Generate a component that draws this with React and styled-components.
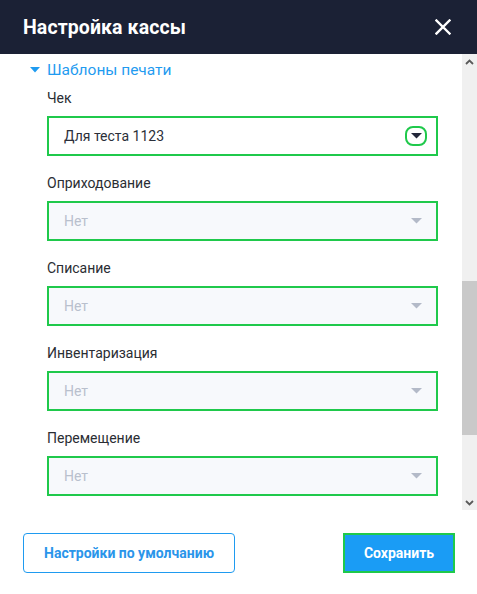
import styled, { createGlobalStyle } from "styled-components";

const GlobalStyle = createGlobalStyle`
  html, body {
    margin: 0;
    padding: 0;
    background: #ffffff;
  }
  body {
    font-family: Roboto, "Liberation Sans", sans-serif;
  }
  * {
    box-sizing: border-box;
  }
`;

const Modal = styled.div`
  width: 477px;
  height: 594px;
  display: flex;
  flex-direction: column;
  background: #ffffff;
`;

const Header = styled.div`
  height: 54px;
  flex-shrink: 0;
  display: flex;
  align-items: center;
  justify-content: space-between;
  padding: 0 25px 0 23px;
  background: #1b2135;
`;

const Title = styled.h1`
  margin: 0;
  font-size: 19.5px;
  font-weight: 700;
  color: #ffffff;
  letter-spacing: 0.1px;
`;

const CloseButton = styled.button`
  width: 18px;
  height: 18px;
  padding: 0;
  border: none;
  background: transparent;
  display: flex;
  align-items: center;
  justify-content: center;
  cursor: pointer;
`;

const Body = styled.div`
  flex: 1;
  min-height: 0;
  display: flex;
`;

const Content = styled.div`
  flex: 1;
  overflow: hidden;
  padding: 5px 24px 0 0;
`;

const Scrollbar = styled.div`
  width: 15px;
  flex-shrink: 0;
  display: flex;
  flex-direction: column;
  background: #f0f0f0;
`;

const ScrollButton = styled.div`
  height: 15px;
  display: flex;
  align-items: center;
  justify-content: center;
`;

const Track = styled.div`
  flex: 1;
  padding-top: ${(props) => props.offset}px;
`;

const Thumb = styled.div`
  height: ${(props) => props.size}px;
  background: #c9c9c9;
`;

const Section = styled.div`
  display: flex;
  flex-direction: column;
`;

const SectionHeader = styled.div`
  display: flex;
  align-items: center;
  height: 22px;
  padding-left: 30px;
  gap: 7px;
  font-size: 15.5px;
  color: #1f9bf0;
  cursor: pointer;
`;

const Fields = styled.div`
  display: flex;
  flex-direction: column;
  gap: 17px;
  padding: 7px 0 0 47px;
`;

const Field = styled.div`
  display: flex;
  flex-direction: column;
  gap: 8px;
`;

const Label = styled.label`
  font-size: 14px;
  line-height: 20px;
  color: #2a2d33;
`;

const SelectBox = styled.div`
  height: 40px;
  display: flex;
  align-items: center;
  justify-content: space-between;
  padding: 0 8px 0 15px;
  border: 2px solid #1fc94b;
  background: ${(props) => (props.disabled ? "#f7f9fc" : "#ffffff")};
  font-size: 14px;
  color: ${(props) => (props.disabled ? "#b9c0cd" : "#2b2f3a")};
`;

const Arrow = styled.span`
  width: 22px;
  height: 20px;
  display: flex;
  align-items: center;
  justify-content: center;
  border-radius: 8px;
  border: 2px solid ${(props) => (props.focused ? "#1fc94b" : "transparent")};
  margin-right: 1px;
`;

const Footer = styled.div`
  height: 84px;
  flex-shrink: 0;
  display: flex;
  align-items: center;
  justify-content: space-between;
  padding: 2px 22px 0 23px;
`;

const Button = styled.button`
  height: 40px;
  padding: 0 10px;
  font-family: Roboto, "Liberation Sans", sans-serif;
  font-size: 14px;
  font-weight: 700;
  cursor: pointer;
  border: ${(props) => (props.primary ? "2px solid #1fc94b" : "1px solid #1f9bf0")};
  border-radius: ${(props) => (props.primary ? "0" : "4px")};
  background: ${(props) => (props.primary ? "#1a9cf5" : "#ffffff")};
  color: ${(props) => (props.primary ? "#ffffff" : "#2a95ea")};
  width: ${(props) => props.width}px;
`;

const Caret = ({ color }) => (
  <svg width="10" height="6" viewBox="0 0 10 6">
    <path d="M0 0 L10 0 L5 5.5 Z" fill={color} />
  </svg>
);

const Chevron = ({ up }) => (
  <svg width="9" height="6" viewBox="0 0 9 6">
    <path d={up ? "M1 5 L4.5 1.5 L8 5" : "M1 1 L4.5 4.5 L8 1"} fill="none" stroke="#5a5a5a" strokeWidth="1.8" />
  </svg>
);

const Select = ({ value, disabled, focused }) => (
  <SelectBox disabled={disabled}>
    <span>{value}</span>
    <Arrow focused={focused}>
      <svg width="11" height="6" viewBox="0 0 11 6">
        <path d="M0 0 L11 0 L5.5 5.5 Z" fill={disabled ? "#b3bac8" : "#23273a"} />
      </svg>
    </Arrow>
  </SelectBox>
);

const printFields = [
  { label: "Чек", value: "Для теста 1123", focused: true },
  { label: "Оприходование", value: "Нет", disabled: true },
  { label: "Списание", value: "Нет", disabled: true },
  { label: "Инвентаризация", value: "Нет", disabled: true },
  { label: "Перемещение", value: "Нет", disabled: true },
];

const App = () => (
  <>
    <GlobalStyle />
    <Modal>
      <Header>
        <Title>Настройка кассы</Title>
        <CloseButton aria-label="Закрыть">
          <svg width="16" height="16" viewBox="0 0 16 16">
            <path d="M1.5 1.5 L14.5 14.5 M14.5 1.5 L1.5 14.5" stroke="#ffffff" strokeWidth="2.4" strokeLinecap="square" />
          </svg>
        </CloseButton>
      </Header>
      <Body>
        <Content>
          <Section>
            <SectionHeader>
              <Caret color="#1f9bf0" />
              Шаблоны печати
            </SectionHeader>
            <Fields>
              {printFields.map((f) => (
                <Field key={f.label}>
                  <Label>{f.label}</Label>
                  <Select value={f.value} disabled={f.disabled} focused={f.focused} />
                </Field>
              ))}
            </Fields>
          </Section>
        </Content>
        <Scrollbar>
          <ScrollButton>
            <Chevron up />
          </ScrollButton>
          <Track offset={212}>
            <Thumb size={154} />
          </Track>
          <ScrollButton>
            <Chevron />
          </ScrollButton>
        </Scrollbar>
      </Body>
      <Footer>
        <Button width={212}>Настройки по умолчанию</Button>
        <Button primary width={112}>Сохранить</Button>
      </Footer>
    </Modal>
  </>
);

export default App;
